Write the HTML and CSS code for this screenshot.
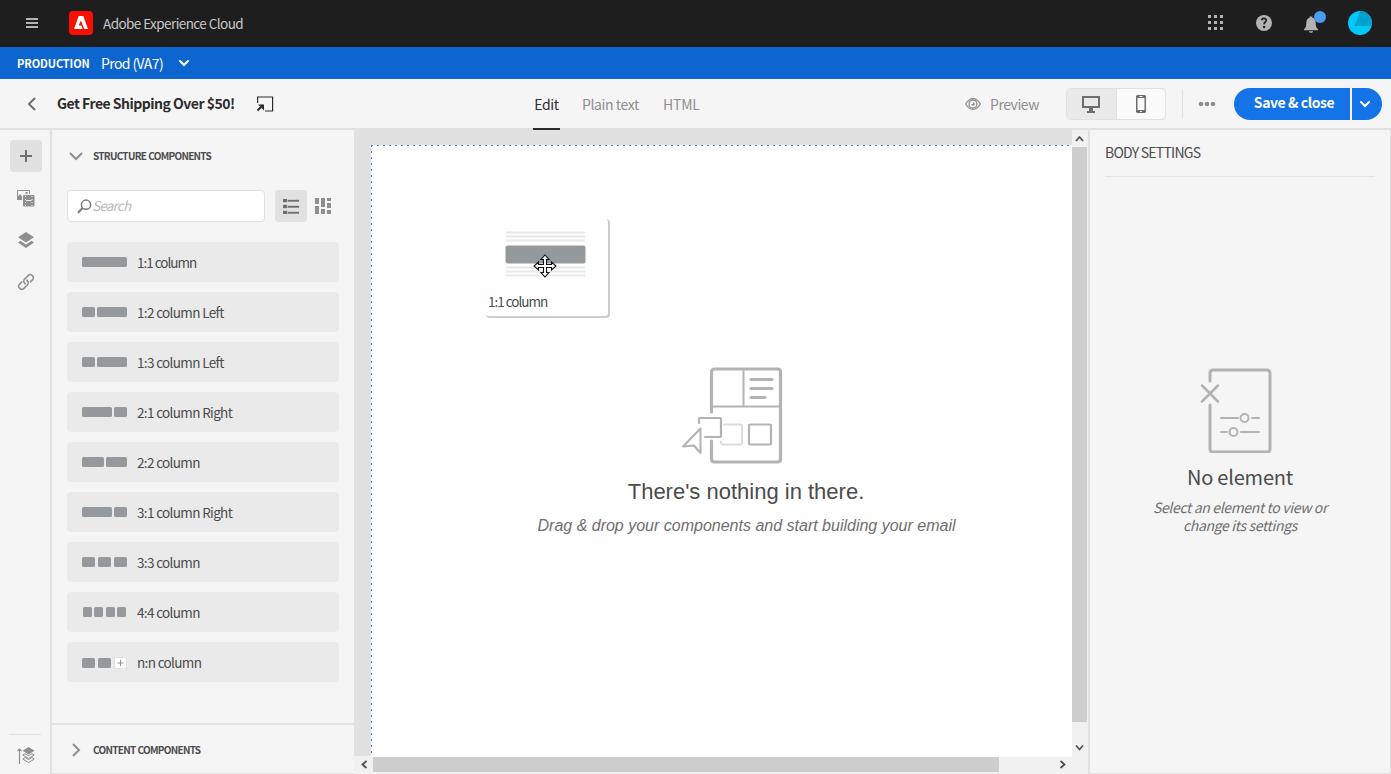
FILE: index.html
```html
<!DOCTYPE html>
<html lang="en">
<head>
<meta charset="utf-8">
<title>Adobe Experience Cloud</title>
<link rel="stylesheet" href="styles.css">
</head>
<body>
<div class="app">
  <header class="shell">
    <svg class="menu" width="12" height="10" fill="#b3b3b3"><path d="M0 0h12v2H0zM0 4h12v2H0zM0 8h12v2H0z"/></svg>
    <svg class="logo" width="24" height="24"><rect width="24" height="24" rx="4" fill="#fa0f00"/><path d="M9.700 5h4.600L19 18h-3.800L12 9.500 9.700 14.600h2.700l1.200 3.400H5z" fill="#fff"/></svg>
    <span class="brand">Adobe Experience Cloud</span>
    <div class="shell-tools">
      <svg width="16" height="16" fill="#b3b3b3"><path d="M0 0h3v3H0zM6 0h3v3H6zM12 0h3v3h-3zM0 6h3v3H0zM6 6h3v3H6zM12 6h3v3h-3zM0 12h3v3H0zM6 12h3v3H6zM12 12h3v3h-3z"/></svg>
      <svg class="help" width="16" height="16"><circle cx="8" cy="8" r="8" fill="#b3b3b3"/><path d="M5.600 5.200C6.200 2.600 10.500 3 10.200 5.500 10 7.200 8.100 7.300 8.100 9.300" fill="none" stroke="#1e1e1e" stroke-width="1.800"/><circle cx="8.100" cy="12" r="1.300" fill="#1e1e1e"/></svg>
      <svg class="bell" width="26" height="24"><path d="M1 19.200v-1c2-1.700 2.200-3 2.300-6.200C3.500 8.500 4.500 7.400 6.700 6.800V5.500h2.600v1.300C11.500 7.400 12.500 8.500 12.700 12c.1 3.200.3 4.500 2.300 6.200v1zM5.900 20.300h4.200c-.4 2-3.800 2-4.200 0z" fill="#b3b3b3"/><circle cx="17" cy="6" r="6" fill="#4b9cf5"/></svg>
      <svg class="avatar" width="24" height="24"><circle cx="12" cy="12" r="12" fill="#00c8ff"/><path d="M12.300.1C19 .2 24 5.800 24 12a12 12 0 0 1-.4 3H6.700z" fill="#00a0cc"/></svg>
    </div>
  </header>
  <div class="env">
    <b class="env-kind">PRODUCTION</b><span class="env-name">Prod (VA7)</span>
    <svg width="12" height="8" fill="none" stroke="#fff" stroke-width="2" stroke-linecap="round"><path d="M2 2l4 4 4-4"/></svg>
  </div>
  <div class="toolbar">
    <svg class="back" width="10" height="14" fill="none" stroke="#6e6e6e" stroke-width="2"><path d="M9 1L3 7l6 6"/></svg>
    <b class="title">Get Free Shipping Over $50!</b>
    <svg class="open" width="18" height="16" fill="none" stroke="#2c2c2c" stroke-width="1.200"><path d="M.6 7V1h15v14H8"/><path d="M.5 14.500L4 11" stroke-width="2"/><path d="M1 8.500h6v6z" fill="#2c2c2c" stroke="none"/></svg>
    <nav class="tabs"><a class="tab tab-on">Edit</a><a class="tab tab-plain">Plain text</a><a class="tab tab-html">HTML</a></nav>
    <div class="actions">
      <svg width="16" height="12" fill="none" stroke="#8e8e8e" stroke-width="1.300"><path d="M.7 6C3 2.300 5.400.7 8 .7S13 2.300 15.300 6C13 9.700 10.600 11.300 8 11.300S3 9.700.7 6z"/><circle cx="8" cy="6" r="4"/><path d="M8 4.200a1.800 1.800 0 1 1-1.800 1.800H8z" fill="#8e8e8e" stroke="none"/></svg>
      <span class="preview">Preview</span>
      <div class="devices">
        <div class="device device-on"><svg width="18" height="17" fill="#6e6e6e"><path d="M0 0h18v12h-7v3h2v2H5v-2h2v-3H0zM2 2v8h14V2z" fill-rule="evenodd"/></svg></div>
        <div class="device"><svg width="10" height="18" fill="#6e6e6e"><path d="M1 0h8l1 1v16l-1 1H1l-1-1V1zM1.500 3v12h7V3zM3.500 1v.9h3V1zM4 16v1h2v-1z" fill-rule="evenodd"/></svg></div>
      </div>
      <i class="split"></i>
      <svg class="more" width="18" height="6" fill="#8e8e8e"><circle cx="3" cy="3" r="2.300"/><circle cx="9" cy="3" r="2.300"/><circle cx="15" cy="3" r="2.300"/></svg>
      <b class="save">Save &amp; close</b>
      <div class="save-more"><svg width="12" height="8" fill="none" stroke="#fff" stroke-width="2" stroke-linecap="round"><path d="M2 2l4 4 4-4"/></svg></div>
    </div>
  </div>
  <main class="work">
    <aside class="rail">
      <div class="rail-item rail-on"><svg width="12" height="12" fill="#6e6e6e"><path d="M5 0h2v5h5v2H7v5H5V7H0V5h5z"/></svg></div>
      <div class="rail-item"><svg width="18" height="17"><path d="M.5 10V.5h12V4" fill="none" stroke="#8e8e8e"/><path d="M1 10V6.500L3 4l2 2.500V10zM8.500 2h2v2h-2z" fill="#8e8e8e"/><rect x="6" y="5" width="11.500" height="11.500" rx="1" fill="#8e8e8e"/><path d="M8.500 6v10M15 6v10" stroke="#f5f5f5" stroke-width="1" stroke-dasharray="1 2"/><path d="M9 10.500h5.500" stroke="#f5f5f5"/></svg></div>
      <div class="rail-item"><svg width="16" height="16" fill="#8e8e8e"><path d="M8 0l8 5.200-8 5.200-8-5.200z"/><path d="M2.400 8.800L8 12.400l5.600-3.600L16 10.600 8 16 0 10.600z"/></svg></div>
      <div class="rail-item"><svg width="18" height="18" viewBox="0 0 18 18" fill="none" stroke="#8e8e8e" stroke-width="1.500"><g transform="rotate(-45 9 9)"><path d="M7.500 10.300A3 3 0 0 1 9.500 6H15a3 3 0 0 1 0 6h-3.500"/><path d="M10.500 7.700A3 3 0 0 1 8.500 12H3a3 3 0 0 1 0-6h3.500"/></g></svg></div>
      <div class="rail-end"><svg width="18" height="18"><path d="M2.500 17V2M.5 4l2-2 2 2" fill="none" stroke="#8e8e8e" stroke-width="1.200"/><path d="M11.500 0l6 3.700-6 3.700-6-3.700z" fill="#8e8e8e"/><path d="M8 6.700L5.800 8l5.700 3.500L17.200 8 15 6.700l-3.500 2.100zM8 10.500l-2.200 1.600 5.700 3.500 5.700-3.500-2.200-1.600-3.500 2.100z" fill="none" stroke="#8e8e8e"/></svg></div>
    </aside>
    <aside class="panel">
      <h2 class="section"><svg width="14" height="14" fill="none" stroke="#8e8e8e" stroke-width="2"><path d="M1 4l6 6 6-6"/></svg><span>STRUCTURE COMPONENTS</span></h2>
      <div class="find">
        <div class="search"><svg width="15" height="15" fill="none" stroke="#7a7a7a" stroke-width="1.500"><circle cx="9" cy="5.700" r="4.600"/><path d="M5.600 9L1 13.700" stroke-width="2"/></svg><em>Search</em></div>
        <div class="view view-on"><svg width="16" height="15" fill="#6e6e6e"><path d="M0 0h4v3H0zM5 1h11v1.500H5zM0 6h4v3H0zM5 7h11v1.500H5zM0 12h4v3H0zM5 13h11v1.500H5z" stroke="#6e6e6e" stroke-width=".4"/></svg></div>
        <div class="view"><svg width="17" height="16" fill="#8e8e8e"><path d="M0 0h4v6H0zM0 8h4v8H0zM6 0h4v9H6zM6 11h4v5H6zM12 0h4v3h-4zM12 5h4v5h-4zM12 12h4v4h-4z"/></svg></div>
      </div>
      <ul class="list">
        <li class="item"><span class="thumb"><i class="w44"></i></span><span class="name tight">1:1 column</span></li>
        <li class="item"><span class="thumb"><i class="w13"></i><i class="w29"></i></span><span class="name">1:2 column Left</span></li>
        <li class="item"><span class="thumb"><i class="w13"></i><i class="w29"></i></span><span class="name">1:3 column Left</span></li>
        <li class="item"><span class="thumb"><i class="w29"></i><i class="w13"></i></span><span class="name">2:1 column Right</span></li>
        <li class="item"><span class="thumb"><i class="w21"></i><i class="w21"></i></span><span class="name">2:2 column</span></li>
        <li class="item"><span class="thumb"><i class="w29"></i><i class="w13"></i></span><span class="name">3:1 column Right</span></li>
        <li class="item"><span class="thumb"><i class="w13"></i><i class="w13"></i><i class="w13"></i></span><span class="name">3:3 column</span></li>
        <li class="item"><span class="thumb thumb-4"><i class="w9"></i><i class="w9"></i><i class="w9"></i><i class="w9"></i></span><span class="name">4:4 column</span></li>
        <li class="item"><span class="thumb thumb-n"><i class="w13"></i><i class="w13"></i><svg width="13" height="12"><rect x=".5" y=".5" width="12" height="11" fill="#fff" stroke="#ccc" stroke-dasharray="1 1"/><path d="M3.500 6h6M6.500 3v6" stroke="#8e9396"/></svg></span><span class="name">n:n column</span></li>
      </ul>
      <h2 class="section section-end"><svg width="14" height="14" fill="none" stroke="#8e8e8e" stroke-width="2"><path d="M4 1l6 6-6 6"/></svg><span>CONTENT COMPONENTS</span></h2>
    </aside>
    <section class="stage">
      <div class="view-port">
        <div class="page">
          <div class="empty">
            <svg width="102" height="98" fill="none" stroke="#b3b3b3" stroke-width="3.200" stroke-linecap="round"><path d="M30.500 46V6q0-3 3-3h63q3 0 3 3v87q0 3-3 3h-63q-3 0-3-3V75"/><path d="M32 40.500h66M62.500 4v36" stroke-width="2" stroke-linecap="butt"/><path d="M70 13.500h21M70 22.500h21M70 31.500h14"/><path d="M43 58.500h16q2 0 2 2v16q0 2-2 2H42q-2 0-2-2v-1" stroke="#dcdcdc" stroke-width="2"/><rect x="68" y="58.500" width="22" height="20" rx="1" stroke-width="2.200"/><path d="M18 57v-4q0-1 1-1h20q1 0 1 1v17q0 1-1 1H24" stroke-width="2.200"/><path d="M19.500 62.500L2 80.500l11-1 6.500 7.500z" stroke-width="2" stroke-linejoin="round"/></svg>
            <h1 class="empty-title">There's nothing in there.</h1>
            <p class="empty-note">Drag &amp; drop your components and start building your email</p>
          </div>
        </div>
      </div>
      <div class="vbar"><svg width="15" height="17" fill="none" stroke="#505050" stroke-width="1.800"><path d="M4 11l3.500-4 3.500 4"/></svg><i class="vthumb"></i><svg class="down" width="15" height="17" fill="none" stroke="#505050" stroke-width="1.800"><path d="M4 6.500l3.500 4 3.500-4"/></svg></div>
      <div class="hbar"><svg width="17" height="16" fill="none" stroke="#505050" stroke-width="1.800"><path d="M10.500 4L6.500 7.500l4 3.500"/></svg><i class="hthumb"></i><svg class="right" width="17" height="16" fill="none" stroke="#505050" stroke-width="1.800"><path d="M5.500 4l4 3.500-4 3.500"/></svg></div>
      <div class="ghost">
        <svg width="122" height="70"><path d="M20 13.500h79M20 17.500h79M20 21.500h79M20 48.500h79M20 52.500h79M20 56.500h79" stroke="#e8e8e8" stroke-width="2"/><rect x="19.500" y="26.500" width="80" height="18" rx="2" fill="#95999c"/></svg>
        <span class="tight">1:1 column</span>
      </div>
      <svg class="cursor" width="24" height="24"><path d="M12 1l4 4.500h-2.500v5h5V8L23 12l-4.500 4v-2.500h-5v5H16L12 23l-4-4.500h2.500v-5h-5V16L1 12l4.500-4v2.500h5v-5H8z" fill="#fff" stroke="#111" stroke-width="1.100"/></svg>
    </section>
    <aside class="settings">
      <h2 class="settings-title">BODY SETTINGS</h2>
      <div class="none">
        <svg width="76" height="86" fill="none" stroke="#b3b3b3" stroke-width="3" stroke-linecap="round"><path d="M12 14V6q0-3 3-3h54q3 0 3 3v76q0 3-3 3H15q-3 0-3-3V38"/><path d="M4 18.500l16 16M20 18.500l-16 16" stroke-width="2.500"/><path d="M23 51h17M54 51h7M23 65h6M43 65h18" stroke-width="2"/><circle cx="46.500" cy="51" r="4" stroke-width="2"/><circle cx="35.500" cy="65" r="4" stroke-width="2"/></svg>
        <h3 class="none-title">No element</h3>
        <p class="none-note">Select an element to view or<br>change its settings</p>
      </div>
    </aside>
  </main>
</div>
</body>
</html>
```

FILE: styles.css
```css
* { box-sizing: border-box; }
body { margin: 0; font: 14px/18px "Noto Sans CJK SC", "Noto Sans", sans-serif; color: #4b4b4b; }
h1, h2, h3, p, ul { margin: 0; padding: 0; }
svg { display: block; flex: none; }
.app { display: grid; grid-template-rows: 47px 32px 51px 1fr; width: 1391px; height: 774px; overflow: hidden; background: #f5f5f5; white-space: nowrap; }

.shell { display: flex; align-items: center; background: #1e1e1e; color: #c8c8c8; padding: 0 19px 2px 26px; }
.logo { margin: 1px 10px 0 31px; }
.brand { font-size: 13.500px; letter-spacing: -.57px; }
.shell-tools { display: flex; align-items: center; margin-left: auto; }
.help { margin-left: 32px; }
.bell { margin: 0 17px 0 31px; }
.avatar { margin-left: 2px; }

.env { display: flex; align-items: center; background: #0d66d0; color: #fff; padding-left: 17px; }
.env-kind { width: 84px; font-size: 11px; letter-spacing: -.1px; }
.env-name { width: 77px; letter-spacing: -.6px; }

.toolbar { display: flex; align-items: center; position: relative; padding-left: 26px; border-bottom: 2px solid #e1e1e1; }
.title { width: 200px; margin-left: 21px; padding-bottom: 1px; color: #2c2c2c; letter-spacing: -.5px; }
.tabs { display: flex; align-self: stretch; margin: 0 0 -2px 258px; gap: 22px; }
.tab { display: flex; align-items: center; padding-bottom: 2px; color: #8e8e8e; letter-spacing: -.4px; }
.tab-on { justify-content: center; width: 27px; color: #2c2c2c; border-bottom: 2px solid #2c2c2c; padding: 0; }
.tab-plain { width: 59px; }
.tab-html { letter-spacing: -.2px; }
.actions { display: flex; align-items: center; margin: 1px 9px 0 auto; }
.preview { width: 77px; padding: 0 0 1px 9px; margin-right: 8px; color: #8e8e8e; letter-spacing: -.45px; }
.devices { display: flex; width: 100px; height: 32px; border: 1px solid #e1e1e1; border-radius: 4px; background: #fafafa; }
.device { display: flex; flex: 1; align-items: center; justify-content: center; }
.device-on { background: #e9e9e9; border-right: 1px solid #e1e1e1; }
.split { width: 1px; height: 28px; margin: 0 15px 0 16px; background: #e1e1e1; }
.save { width: 116px; height: 32px; margin-left: 18px; border-radius: 16px 0 0 16px; background: #1473e6; color: #fff; text-align: center; line-height: 28px; padding-left: 4px; letter-spacing: -.42px; }
.save-more { display: flex; align-items: center; justify-content: center; width: 30px; height: 32px; margin-left: 2px; padding-right: 4px; border-radius: 0 16px 16px 0; background: #1473e6; }

.work { display: grid; grid-template-columns: 52px 302px 736px 1fr; min-height: 0; }
.rail { display: flex; flex-direction: column; gap: 10px; padding: 10px 8px 0 10px; border-right: 2px solid #e1e1e1; }
.rail-item { display: flex; align-items: center; justify-content: center; width: 32px; height: 32px; border-radius: 4px; }
.rail-on { background: #e1e1e1; }
.rail-end { margin-top: auto; width: 32px; height: 40px; margin-left: -1px; padding: 12px 0 0 8px; border-top: 1px solid #e1e1e1; }

.panel { display: flex; flex-direction: column; border-bottom: 1px solid #e1e1e1; }
.section { display: flex; align-items: center; gap: 10px; height: 52px; padding-left: 17px; font-size: 10px; font-weight: bold; color: #4b4b4b; letter-spacing: -.72px; word-spacing: .5px; }
.section span { padding-bottom: 1px; }
.find { display: flex; margin: 8px 15px 20px; height: 32px; }
.search { display: flex; align-items: center; width: 198px; padding-left: 9px; margin-right: 10px; border: 1px solid #e1e1e1; border-radius: 4px; background: #fff; color: #b9b9b9; font-size: 13.500px; letter-spacing: -.8px; }
.search em { padding-bottom: 2px; }
.view { display: flex; align-items: center; justify-content: center; width: 32px; border-radius: 4px; }
.view-on { background: #e1e1e1; }
.list { display: grid; gap: 10px; padding: 0 15px; list-style: none; }
.item { display: flex; align-items: center; height: 40px; padding-left: 15px; border-radius: 4px; background: #eaeaea; font-size: 13.500px; letter-spacing: -.65px; }
.name { padding-bottom: 1px; }
.tight { letter-spacing: -1px; }
.thumb { display: flex; justify-content: space-between; width: 45px; margin-right: 10px; }
.thumb i { height: 10px; border-radius: 1.500px; background: #95999c; }
.thumb-4 { padding: 0 1px; }
.thumb-n { align-items: center; padding-top: 2px; }
.w44 { width: 45px; } .w29 { width: 30px; } .w21 { width: 21.500px; } .w13 { width: 13px; } .w9 { width: 9px; }
.section-end { margin-top: auto; height: 50px; padding-top: 2px; border-top: 2px solid #e1e1e1; }

.stage { display: grid; position: relative; grid-template-columns: 718px 18px; grid-template-rows: 626px 18px; background: #f1f1f1; border-right: 2px solid #e1e1e1; }
.view-port { background: #e1e1e1; padding: 15px 0 0 17px; }
.page { height: 612px; padding: 1px 0 0 1px; background: repeating-linear-gradient(90deg, #4a7fc0 0 2px, #fff 2px 6px) 0 0 / 100% 1px no-repeat, repeating-linear-gradient(#4a7fc0 0 2px, #fff 2px 6px) 0 0 / 1px 100% no-repeat, #fff; }
.empty { display: flex; flex-direction: column; align-items: center; margin-top: 220px; width: 748px; }
.empty > svg { margin-right: 28px; }
.empty-title { margin-top: 15px; font: 22px/26px "Liberation Sans", Arial, sans-serif; color: #4b4b4b; }
.empty-note { margin: 11px 0 0 1px; font: italic 16px/20px "Liberation Sans", Arial, sans-serif; color: #6e6e6e; }
.vbar { grid-row: 1 / 3; grid-column: 2; width: 15px; height: 643px; display: flex; flex-direction: column; }
.vthumb { height: 575px; background: #cdcdcd; }
.down { margin-top: 17px; }
.hbar { grid-column: 1; grid-row: 2; display: flex; margin: 1px 0 1px 2px; }
.hthumb { width: 626px; height: 15px; background: #cdcdcd; }
.right { margin-left: auto; }
.ghost { position: absolute; left: 132px; top: 89px; width: 124px; height: 99px; background: #fff; border: solid #cdcdcd; border-width: 0 2px 2px 0; border-radius: 4px; }
.ghost span { display: block; margin: 3px 0 0 2px; font-size: 13.500px; }
.cursor { position: absolute; left: 179px; top: 124px; }

.settings { padding: 12px 15px 0; border: solid #e1e1e1; border-width: 0 1px 1px 0; }
.settings-title { height: 35px; border-bottom: 1px solid #e1e1e1; font-size: 14px; font-weight: normal; line-height: 20px; letter-spacing: -.75px; }
.none { display: flex; flex-direction: column; align-items: center; padding-top: 190px; }
.none > svg { margin-right: 8px; }
.none-title { margin-top: 10px; font-size: 20px; line-height: 28px; font-weight: normal; letter-spacing: -.2px; }
.none-note { margin-top: 7px; text-align: center; font-style: italic; color: #6e6e6e; letter-spacing: -.35px; }
```
